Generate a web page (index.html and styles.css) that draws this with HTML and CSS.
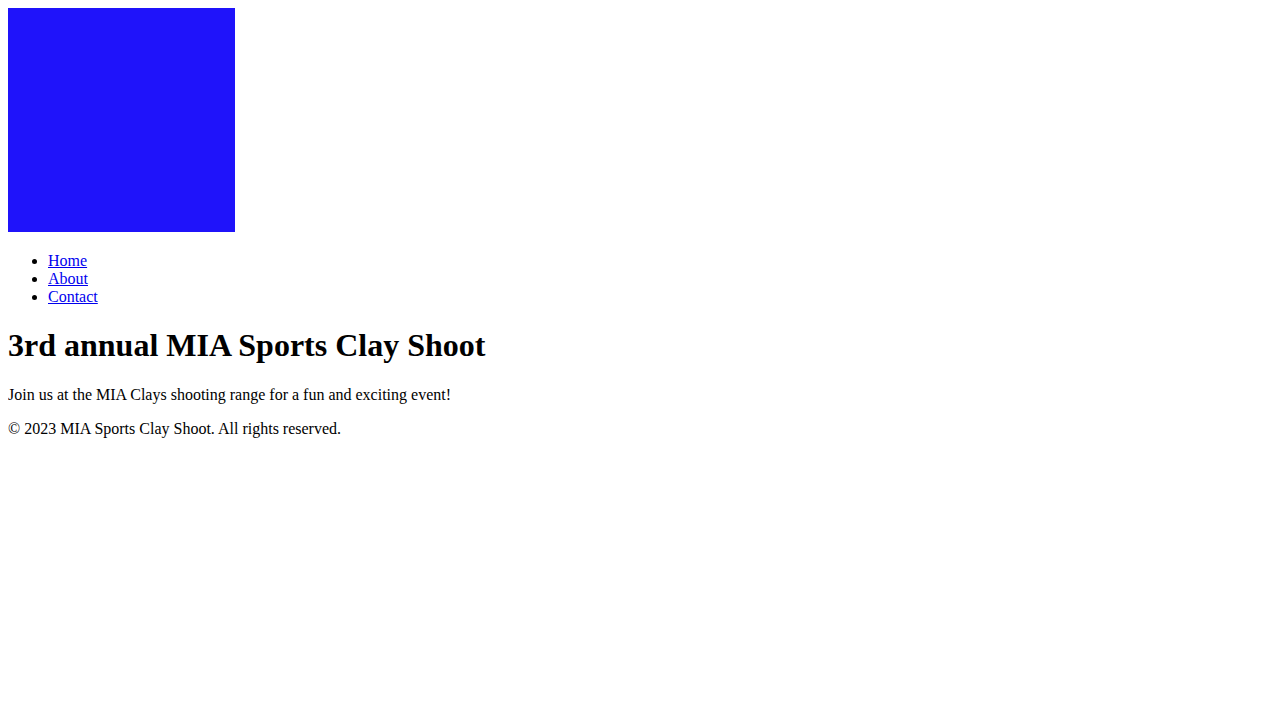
FILE: index.html
```html
<!DOCTYPE html>
<html>
<head>
<meta charset="utf-8">
<title>MIA Sports Clay Shoot</title>
<link rel="stylesheet" href="styles.css">
</head>
<body>
<header class="site-header">
  <div class="logo-row"><svg class="logo" width="227" height="224" viewBox="0 0 227 224"><rect width="227" height="224" fill="#1f13fa"/></svg></div>
  <nav class="main-nav">
    <ul>
      <li><a href="#">Home</a></li>
      <li><a href="#">About</a></li>
      <li><a href="#">Contact</a></li>
    </ul>
  </nav>
</header>
<main>
  <h1>3rd annual MIA Sports Clay Shoot</h1>
  <p>Join us at the MIA Clays shooting range for a fun and exciting event!</p>
</main>
<footer>
  <p>© 2023 MIA Sports Clay Shoot. All rights reserved.</p>
</footer>
</body>
</html>
```
FILE: styles.css
```css
body {
  font-family: "Liberation Serif", "Times New Roman", serif;
  font-size: 16px;
}
.logo {
  display: inline;
  vertical-align: baseline;
}
.main-nav a {
  color: #0000ee;
}
```
